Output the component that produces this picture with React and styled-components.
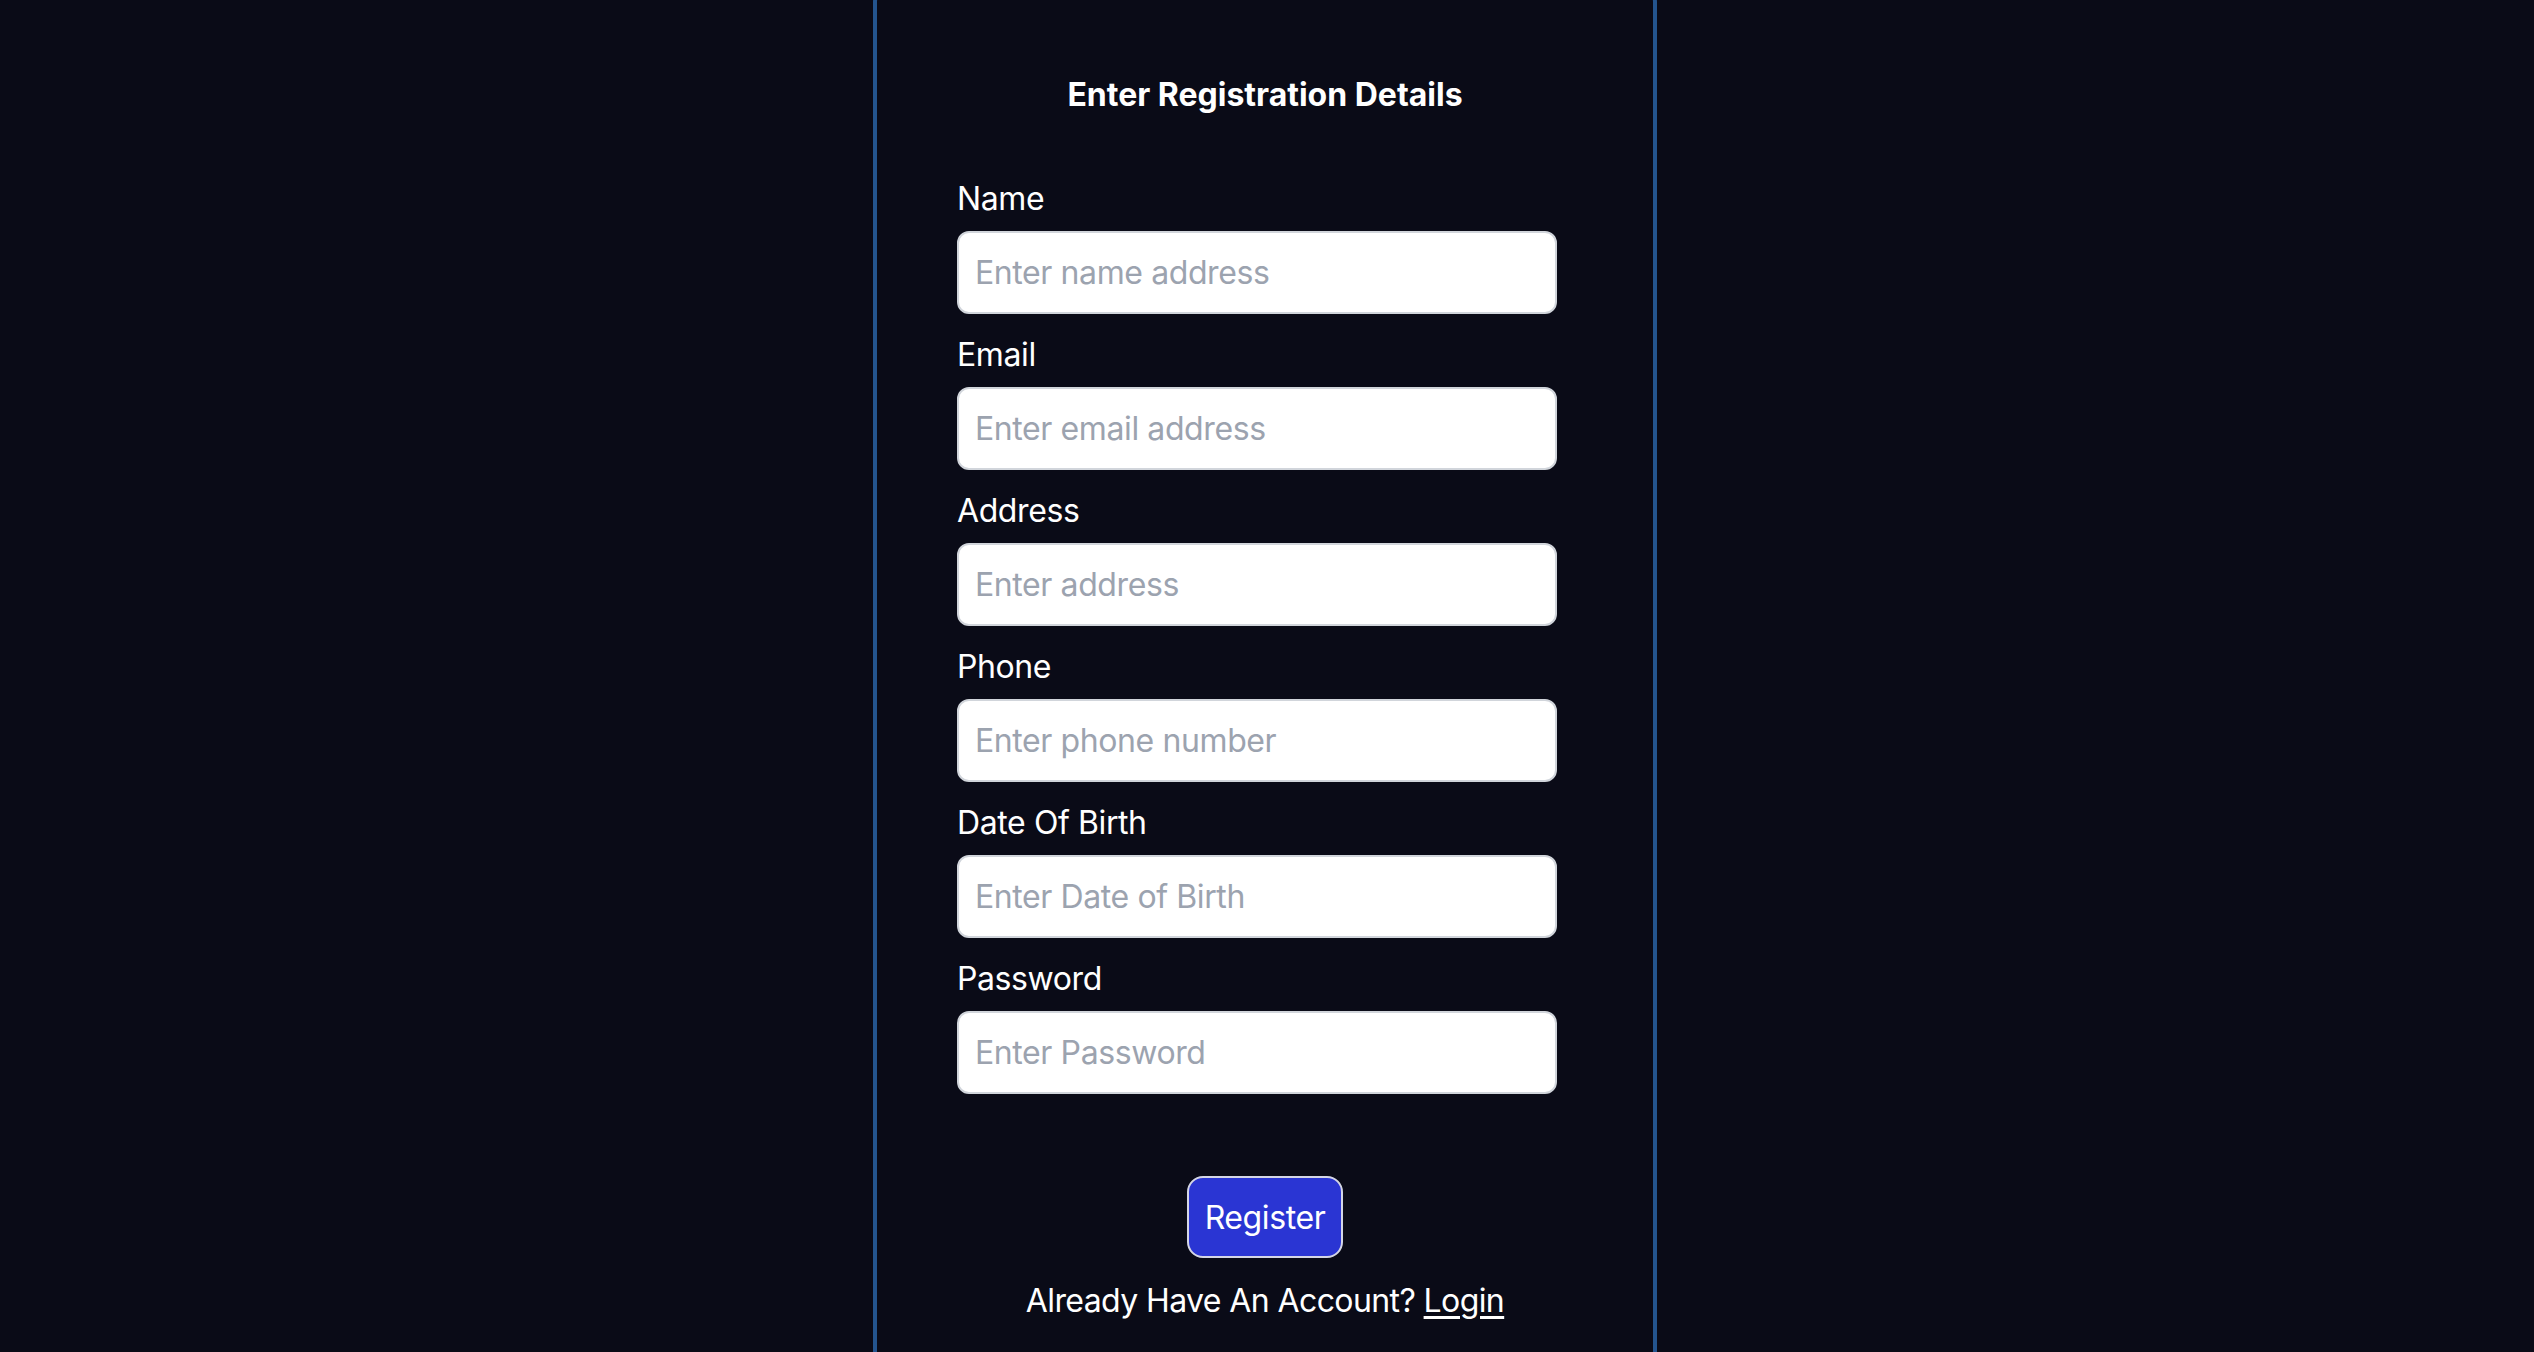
import React from 'react';
import styled, { createGlobalStyle } from 'styled-components';

const GlobalStyle = createGlobalStyle`
    * {
        box-sizing: border-box;
    }
    html, body {
        margin: 0;
        padding: 0;
        background-color: #0a0b17;
        font-family: Inter, "Noto Sans", "Liberation Sans", sans-serif;
        color: #ffffff;
    }
`;

const Page = styled.div`
    height: 100vh;
    display: flex;
    justify-content: center;
    align-items: flex-start;
    overflow: hidden;
    padding-right: 4px;
`;

const Card = styled.div`
    width: 784px;
    margin-top: -14px;
    padding: 81px 96px 120px 80px;
    border: 4px solid #24558f;
    border-radius: 16px;
    background-color: #0a0b17;
    display: flex;
    flex-direction: column;
`;

const Title = styled.h2`
    margin: 0 0 56px;
    font-size: 32px;
    line-height: 48px;
    font-weight: 700;
    text-align: center;
    padding-left: 16px;
`;

const Form = styled.form`
    display: flex;
    flex-direction: column;
    width: 600px;
`;

const Field = styled.div`
    display: flex;
    flex-direction: column;
    gap: 8px;
    margin-bottom: 17px;
`;

const Label = styled.label`
    font-size: 32px;
    line-height: 48px;
    font-weight: 400;
    letter-spacing: -0.4px;
`;

const Input = styled.input`
    height: 83px;
    width: 100%;
    padding: 0 16px;
    border: 2px solid #d1d5db;
    border-radius: 12px;
    background-color: #ffffff;
    font-family: inherit;
    font-size: 32px;
    letter-spacing: -0.4px;
    color: #111827;
    outline: none;
    &::placeholder {
        color: #9ca3af;
    }
`;

const Actions = styled.div`
    display: flex;
    flex-direction: column;
    align-items: center;
    margin-top: 65px;
    padding-left: 16px;
    gap: 19px;
`;

const Button = styled.button`
    width: 156px;
    height: 82px;
    border: 2px solid #d4d6e6;
    border-radius: 16px;
    background-color: #2a35d3;
    color: #ffffff;
    font-family: inherit;
    font-size: 32px;
    letter-spacing: -0.4px;
    cursor: pointer;
`;

const Footer = styled.p`
    margin: 0;
    font-size: 32px;
    line-height: 48px;
    letter-spacing: -0.6px;
    a {
        color: #ffffff;
        text-decoration: underline;
        text-underline-offset: 4px;
    }
`;

const fields = [
    { id: 'name', label: 'Name', placeholder: 'Enter name address', type: 'text' },
    { id: 'email', label: 'Email', placeholder: 'Enter email address', type: 'email' },
    { id: 'address', label: 'Address', placeholder: 'Enter address', type: 'text' },
    { id: 'phone', label: 'Phone', placeholder: 'Enter phone number', type: 'text' },
    { id: 'dob', label: 'Date Of Birth', placeholder: 'Enter Date of Birth', type: 'text' },
    { id: 'password', label: 'Password', placeholder: 'Enter Password', type: 'password' },
];

export default class App extends React.Component {
    render() {
        return (
            <Page>
                <GlobalStyle />
                <Card>
                    <Title>Enter Registration Details</Title>
                    <Form onSubmit={(e) => e.preventDefault()}>
                        {fields.map((f) => (
                            <Field key={f.id}>
                                <Label htmlFor={f.id}>{f.label}</Label>
                                <Input id={f.id} type={f.type} placeholder={f.placeholder} />
                            </Field>
                        ))}
                    </Form>
                    <Actions>
                        <Button type="button">Register</Button>
                        <Footer>
                            Already Have An Account? <a href="#">Login</a>
                        </Footer>
                    </Actions>
                </Card>
            </Page>
        );
    }
}
